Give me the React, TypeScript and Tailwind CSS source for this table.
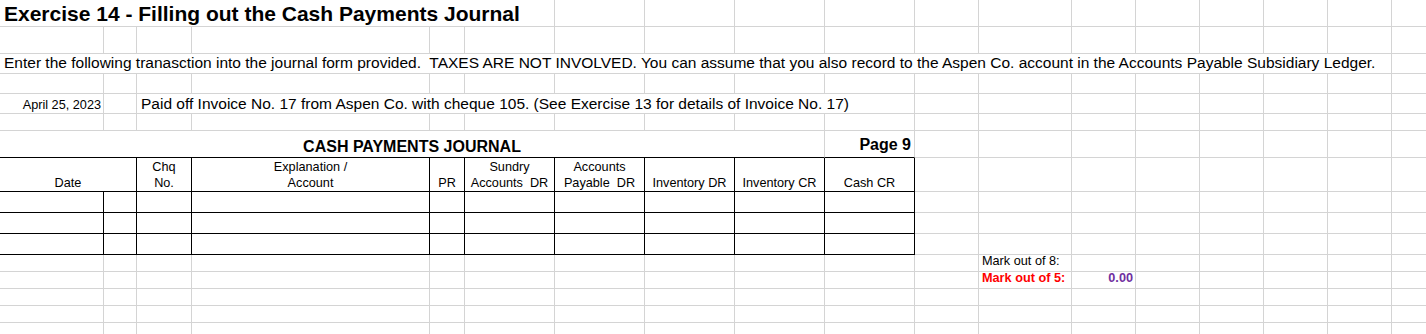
import React from "react";

const GR = "border-r border-r-[#d4d4d4]";
const KR = "border-r border-r-black";
const GB = "border-b border-b-[#d4d4d4]";
const KB = "border-b border-b-black";

type CellProps = {
  r?: string;
  b?: string;
  className?: string;
  children?: React.ReactNode;
};

function Cell({ r = GR, b = GB, className = "", children }: CellProps) {
  return <div className={`${r} ${b} flex min-w-0 ${className}`}>{children}</div>;
}

function Empties({ n, r = GR, b = GB }: { n: number; r?: string; b?: string }) {
  return (
    <>
      {Array.from({ length: n }).map((_, i) => (
        <Cell key={i} r={r} b={b} />
      ))}
    </>
  );
}

function Head({ children, className = "" }: { children: React.ReactNode; className?: string }) {
  return (
    <Cell r={KR} b={KB} className={`flex-col justify-end items-center text-center text-[12.7px] leading-[16px] ${className}`}>
      {children}
    </Cell>
  );
}

export default function App() {
  return (
    <div
      className="w-[1426px] h-[334px] overflow-hidden bg-white text-black"
      style={{ fontFamily: '"Liberation Sans", Arial, sans-serif' }}
    >
      <div className="grid w-[1456px] grid-cols-[104px_33px_55px_238px_35px_90px_90px_90px_90px_90px_64px_93px_64px_64px_64px_64px_64px_64px] grid-rows-[27px_27px_20px_20px_20px_17px_27px_34px_21px_21px_21px_17px_17px_17px_17px_17px]">
        {/* Row 1: title */}
        <Cell className="col-span-6 items-end overflow-visible">
          <span className="pl-[4px] whitespace-nowrap font-bold text-[21px] leading-[24px]">
            Exercise 14 - Filling out the Cash Payments Journal
          </span>
        </Cell>
        <Empties n={12} />

        {/* Row 2 */}
        <Empties n={18} />

        {/* Row 3: instruction */}
        <Cell className="col-span-17 items-end">
          <span className="pl-[4px] pb-[1px] whitespace-nowrap text-[15.5px] leading-[18px]">
            Enter the following tranasction into the journal form provided.&nbsp; TAXES ARE NOT INVOLVED. You can assume that you also record to the Aspen Co. account in the Accounts Payable Subsidiary Ledger.
          </span>
        </Cell>
        <Empties n={1} />

        {/* Row 4 */}
        <Empties n={18} />

        {/* Row 5: transaction */}
        <Cell className="items-end justify-end">
          <span className="pr-[2px] whitespace-nowrap text-[12.7px] leading-[15px]">April 25, 2023</span>
        </Cell>
        <Cell />
        <Cell className="col-span-8 items-end">
          <span className="pl-[4px] whitespace-nowrap text-[15.5px] leading-[18px]">
            Paid off Invoice No. 17 from Aspen Co. with cheque 105. (See Exercise 13 for details of Invoice No. 17)
          </span>
        </Cell>
        <Empties n={8} />

        {/* Row 6 */}
        <Empties n={18} />

        {/* Row 7: journal title */}
        <Cell b={KB} className="col-span-9 items-end justify-center">
          <span className="pb-[1px] whitespace-nowrap font-bold text-[16px] leading-[18px]">CASH PAYMENTS JOURNAL</span>
        </Cell>
        <Cell b={KB} className="items-end justify-end">
          <span className="pr-[3px] pb-[3px] whitespace-nowrap font-bold text-[16px] leading-[18px]">Page 9</span>
        </Cell>
        <Empties n={8} />

        {/* Row 8: headers */}
        <Head className="col-span-2">
          <span>Date</span>
        </Head>
        <Head>
          <span>Chq</span>
          <span>No.</span>
        </Head>
        <Head>
          <span>Explanation /</span>
          <span>Account</span>
        </Head>
        <Head>
          <span>PR</span>
        </Head>
        <Head>
          <span>Sundry</span>
          <span className="whitespace-pre">Accounts  DR</span>
        </Head>
        <Head>
          <span>Accounts</span>
          <span className="whitespace-pre">Payable  DR</span>
        </Head>
        <Head>
          <span>Inventory DR</span>
        </Head>
        <Head>
          <span>Inventory CR</span>
        </Head>
        <Head>
          <span>Cash CR</span>
        </Head>
        <Empties n={8} />

        {/* Rows 9-11: journal body */}
        <Empties n={10} r={KR} b={KB} />
        <Empties n={8} />
        <Empties n={10} r={KR} b={KB} />
        <Empties n={8} />
        <Empties n={10} r={KR} b={KB} />
        <Empties n={8} />

        {/* Row 12 */}
        <Empties n={11} />
        <Cell className="items-end">
          <span className="pl-[3px] pb-[2px] whitespace-nowrap text-[12.7px] leading-[15px]">Mark out of 8:</span>
        </Cell>
        <Empties n={6} />

        {/* Row 13 */}
        <Empties n={11} />
        <Cell className="items-end">
          <span className="pl-[3px] pb-[2px] whitespace-nowrap font-bold text-[12.7px] leading-[15px] text-[#ff0000]">
            Mark out of 5:
          </span>
        </Cell>
        <Cell className="items-end justify-end">
          <span className="pr-[2px] pb-[2px] whitespace-nowrap font-bold text-[12.7px] leading-[15px] text-[#7030a0]">0.00</span>
        </Cell>
        <Empties n={5} />

        {/* Rows 14-16 */}
        <Empties n={18} />
        <Empties n={18} />
        <Empties n={18} />
      </div>
    </div>
  );
}
